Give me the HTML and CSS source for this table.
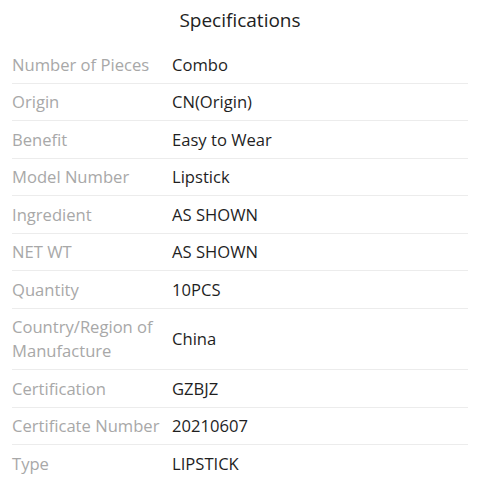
FILE: index.html
```html
<!DOCTYPE html>
<html>
<head>
<meta charset="utf-8">
<link rel="stylesheet" href="styles.css">
</head>
<body>
<div class="specs">
  <h2 class="title">Specifications</h2>
  <div class="table">
    <div class="row"><div class="label">Number of Pieces</div><div class="value">Combo</div></div>
    <div class="row"><div class="label">Origin</div><div class="value">CN(Origin)</div></div>
    <div class="row"><div class="label">Benefit</div><div class="value">Easy to Wear</div></div>
    <div class="row"><div class="label">Model Number</div><div class="value">Lipstick</div></div>
    <div class="row"><div class="label">Ingredient</div><div class="value">AS SHOWN</div></div>
    <div class="row"><div class="label">NET WT</div><div class="value">AS SHOWN</div></div>
    <div class="row"><div class="label">Quantity</div><div class="value">10PCS</div></div>
    <div class="row"><div class="label">Country/Region of Manufacture</div><div class="value">China</div></div>
    <div class="row"><div class="label">Certification</div><div class="value">GZBJZ</div></div>
    <div class="row"><div class="label">Certificate Number</div><div class="value">20210607</div></div>
    <div class="row"><div class="label">Type</div><div class="value">LIPSTICK</div></div>
  </div>
</div>
</body>
</html>
```
FILE: styles.css
```css
html, body {
  margin: 0;
  padding: 0;
  background: #fff;
}
body {
  font-family: "Open Sans", "Liberation Sans", sans-serif;
  color: #222;
}
.specs {
  padding: 0 12px;
}
.title {
  margin: 0;
  height: 46px;
  box-sizing: border-box;
  padding-top: 5px;
  font-size: 19px;
  font-weight: 400;
  line-height: 30px;
  text-align: center;
  color: #222;
}
.row {
  display: grid;
  grid-template-columns: 160px 1fr;
  align-items: center;
  padding: 6.5px 0 6px;
  border-bottom: 1px solid #ececec;
  font-size: 16.6px;
  line-height: 24px;
}
.label {
  color: #a8a8a8;
  padding-right: 6px;
}
.value {
  color: #1f1f1f;
}
```
